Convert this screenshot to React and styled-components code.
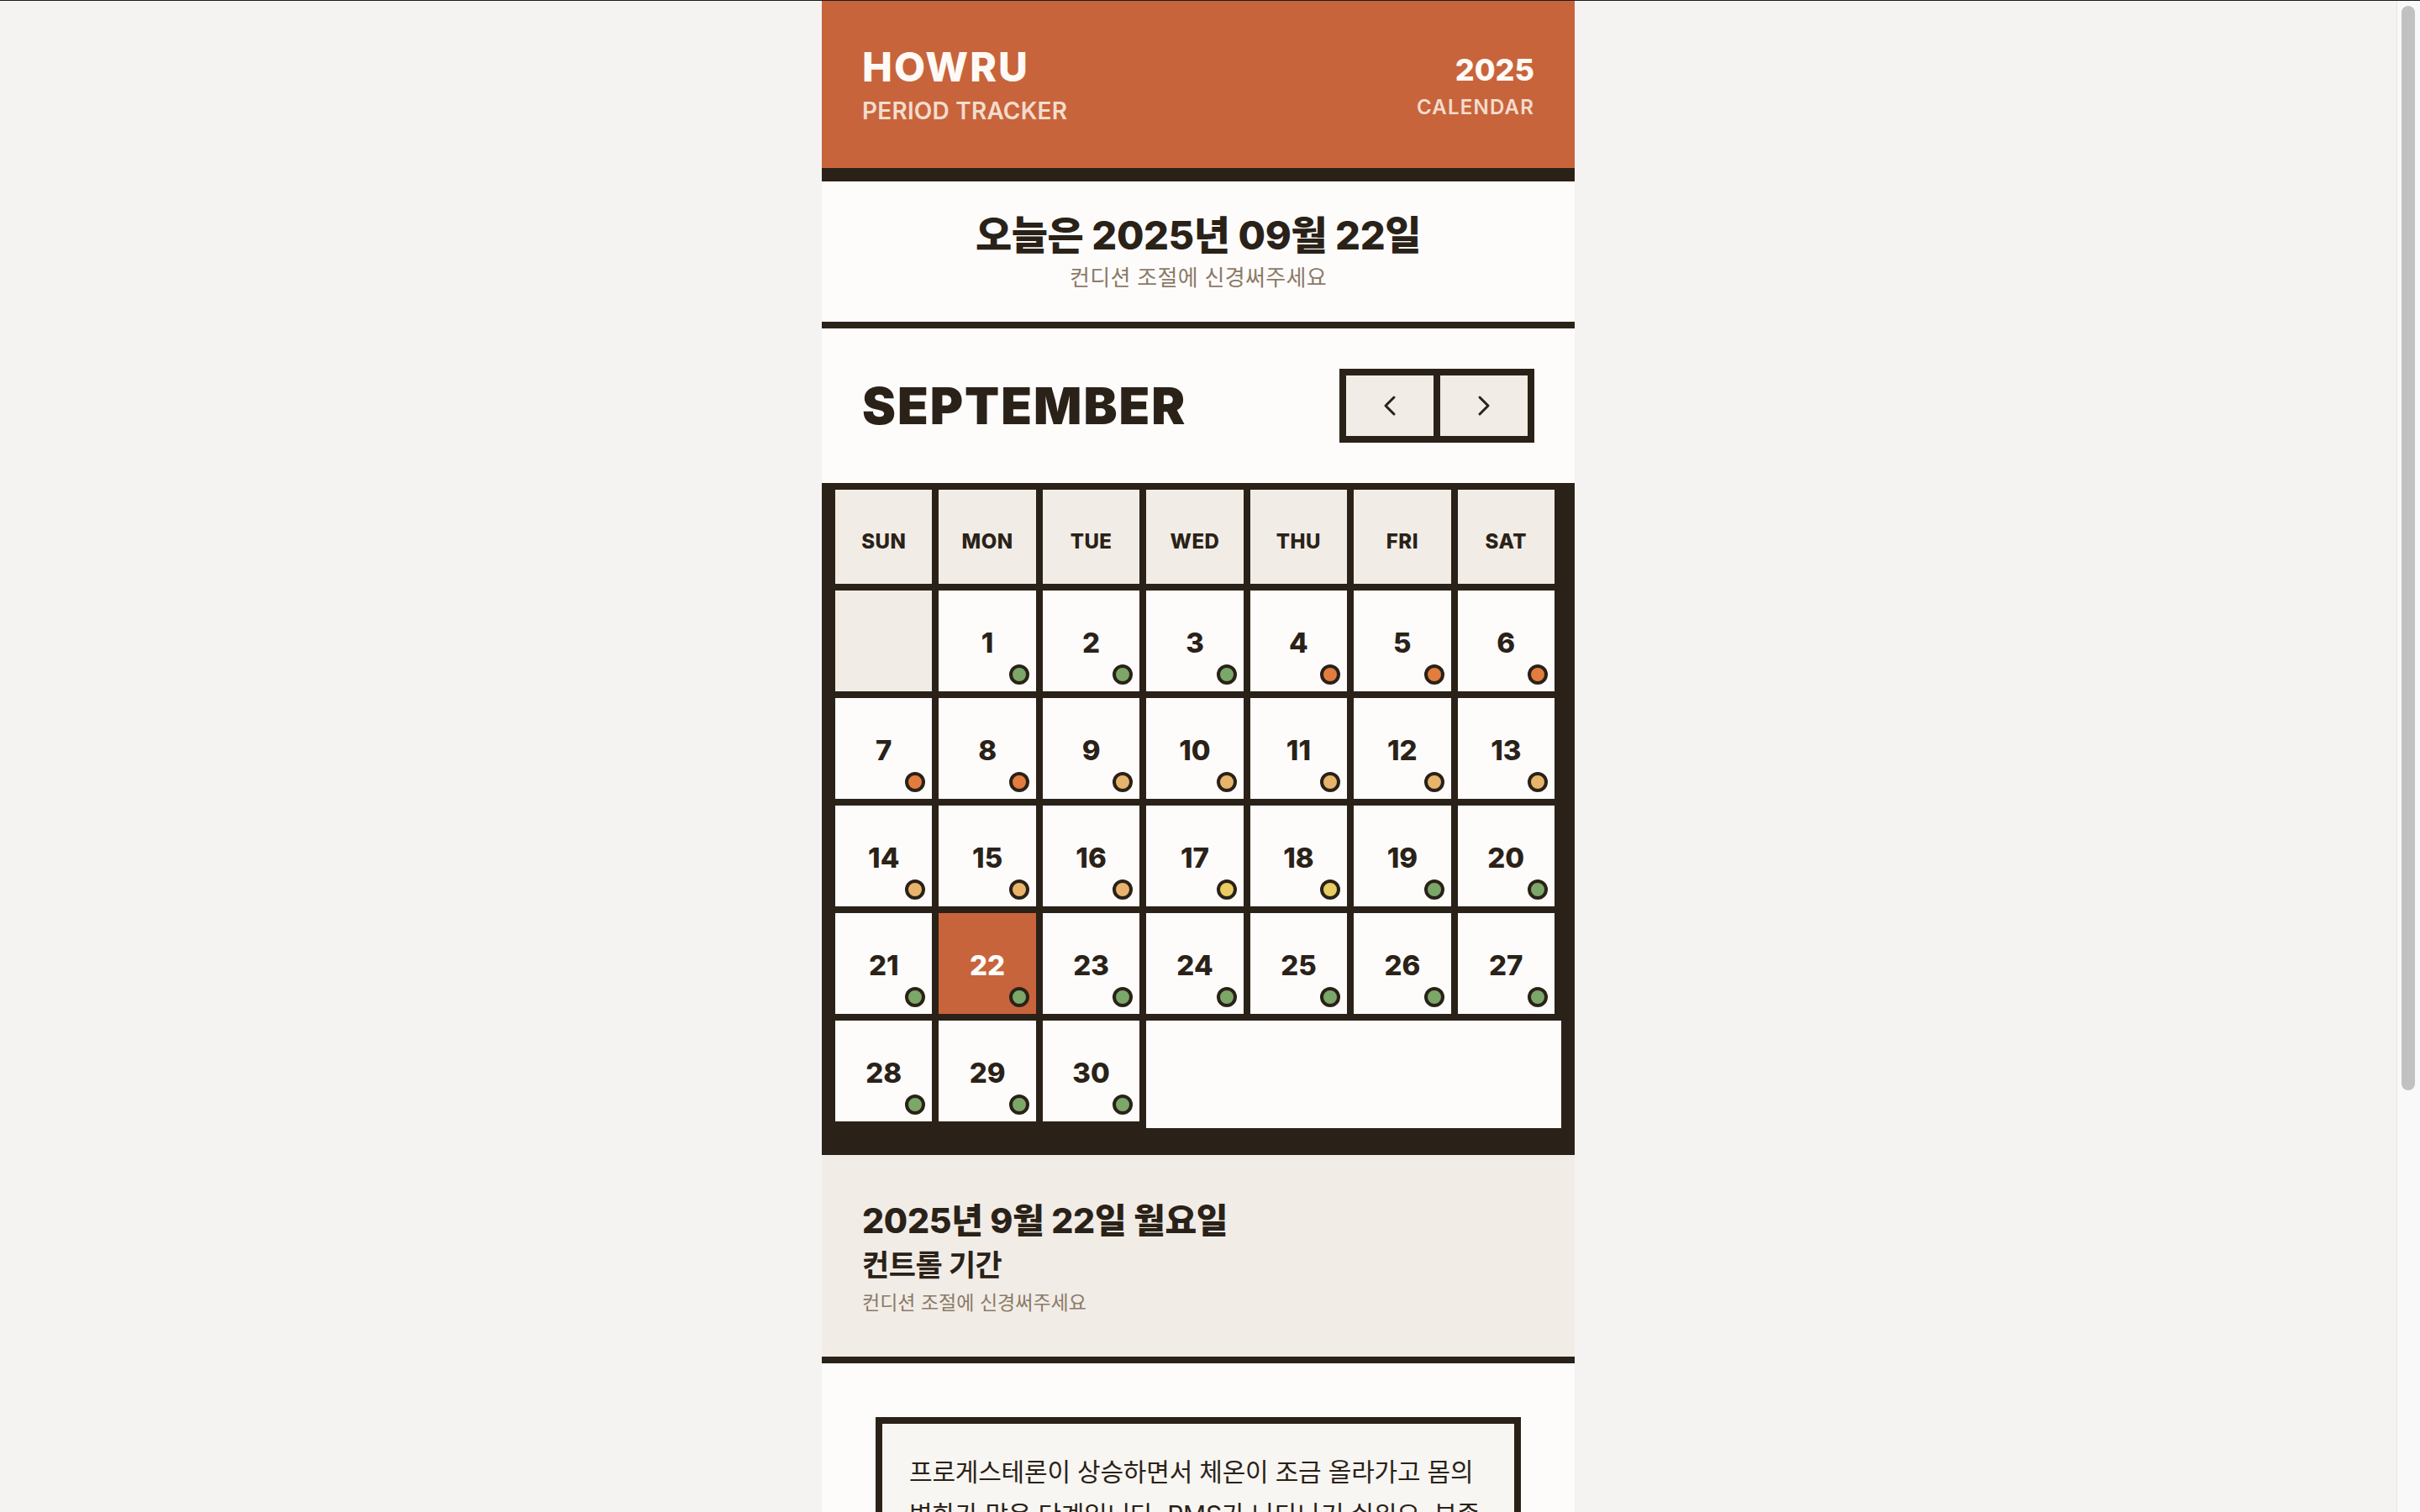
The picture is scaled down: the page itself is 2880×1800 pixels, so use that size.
import React from 'react';
import styled, { createGlobalStyle } from 'styled-components';
import { ChevronLeft, ChevronRight } from 'lucide-react';

const C = {
  dark: '#2a2218',
  orange: '#c8643b',
  beige: '#f1ece6',
  paper: '#fdfcfb',
  page: '#f4f3f1',
  taupe: '#8b7a66',
  cream: '#f4dccd',
  note: '#f8f6f2',
};

const PHASE = {
  green: '#7ba768',
  orange: '#e27d3f',
  peach: '#e8b46c',
  yellow: '#e9cd63',
};

const Global = createGlobalStyle`
  html, body { margin: 0; padding: 0; background: ${C.page}; }
  body {
    font-family: Inter, "Noto Sans CJK KR", sans-serif;
    color: ${C.dark};
  }
  body::before {
    content: '';
    position: fixed;
    top: 0; left: 0; right: 0;
    height: 1px;
    background: #1c1c1c;
    z-index: 10;
  }
`;

const Page = styled.div`
  min-height: 100vh;
  padding-right: 28px;
`;

/* window scrollbar drawn over the page edge */
const ScrollTrack = styled.div`
  position: fixed;
  top: 0;
  right: 0;
  bottom: 0;
  width: 28px;
  box-sizing: border-box;
  background: #f9f9f9;
  border-left: 1px solid #e6e6e6;
  z-index: 5;
`;

const ScrollThumb = styled.div`
  margin: 7px 0 0 5px;
  width: 16px;
  height: 1291px;
  border-radius: 8px;
  background: #c1c1c1;
`;

const Panel = styled.main`
  width: 896px;
  margin: 0 auto;
  background: ${C.paper};
`;

const Header = styled.header`
  box-sizing: border-box;
  height: 216px;
  display: flex;
  justify-content: space-between;
  align-items: flex-start;
  padding: 48px;
  background: ${C.orange};
  border-bottom: 16px solid ${C.dark};
`;

const Brand = styled.div`
  display: flex;
  flex-direction: column;
`;

const Logo = styled.h1`
  margin: 0;
  font-size: 48px;
  font-weight: 800;
  line-height: 1.35;
  letter-spacing: 2px;
  color: #fffaf6;
`;

const Tagline = styled.div`
  margin-top: 1px;
  font-size: 28px;
  font-weight: 600;
  line-height: 1.35;
  letter-spacing: 0.2px;
  color: ${C.cream};
`;

const YearBlock = styled.div`
  display: flex;
  flex-direction: column;
  align-items: flex-end;
  padding-top: 14px;
`;

const Year = styled.div`
  font-size: 36px;
  font-weight: 800;
  line-height: 1.2;
  color: #fffaf6;
`;

const YearLabel = styled.div`
  margin-top: 6px;
  font-size: 24px;
  font-weight: 600;
  line-height: 1.4;
  letter-spacing: 1.2px;
  color: ${C.cream};
`;

const Today = styled.section`
  padding: 35px 48px 34px;
  text-align: center;
  border-bottom: 8px solid ${C.dark};
`;

const TodayTitle = styled.h2`
  margin: 0;
  font-size: 47px;
  font-weight: 800;
  line-height: 1.25;
  letter-spacing: -0.4px;
`;

const Hint = styled.p`
  margin: ${(p) => (p.$small ? '0' : '3px 0 0')};
  font-size: ${(p) => (p.$small ? 23 : 26)}px;
  line-height: ${(p) => (p.$small ? '36px' : '1.4')};
  letter-spacing: ${(p) => (p.$small ? '0' : '0.3px')};
  font-weight: 400;
  color: ${C.taupe};
`;

const MonthBar = styled.section`
  display: flex;
  justify-content: space-between;
  align-items: center;
  padding: 48px;
`;

const MonthName = styled.h2`
  margin: 0;
  font-size: 60px;
  font-weight: 900;
  line-height: 1;
  letter-spacing: 2px;
`;

const Nav = styled.div`
  display: flex;
  gap: 8px;
  border: 8px solid ${C.dark};
  background: ${C.dark};
`;

const NavButton = styled.button`
  width: 104px;
  height: 72px;
  display: flex;
  align-items: center;
  justify-content: center;
  padding: 0;
  border: none;
  background: ${C.beige};
  color: ${C.dark};
  cursor: pointer;
`;

const CalendarFrame = styled.section`
  background: ${C.dark};
  padding: 8px 16px 32px;
`;

const Grid = styled.div`
  display: grid;
  grid-template-columns: repeat(7, 1fr);
  background: ${C.paper};
`;

const WeekCell = styled.div`
  box-sizing: border-box;
  height: 120px;
  padding-top: 10px;
  display: flex;
  align-items: center;
  justify-content: center;
  background: ${C.beige};
  border-right: 8px solid ${C.dark};
  border-bottom: 8px solid ${C.dark};
  font-size: 24px;
  font-weight: 800;
  letter-spacing: 0.5px;
`;

const DayCell = styled.div`
  position: relative;
  box-sizing: border-box;
  height: 128px;
  padding-top: 4px;
  display: flex;
  align-items: center;
  justify-content: center;
  background: ${(p) => (p.$blank ? C.beige : p.$today ? C.orange : C.paper)};
  color: ${(p) => (p.$today ? '#ffffff' : C.dark)};
  border-right: 8px solid ${C.dark};
  border-bottom: 8px solid ${C.dark};
  font-size: 33px;
  font-weight: 800;
`;

const Dot = styled.span`
  position: absolute;
  right: 8px;
  bottom: 8px;
  box-sizing: border-box;
  width: 24px;
  height: 24px;
  border-radius: 50%;
  border: 4px solid ${C.dark};
  background: ${(p) => p.$color};
`;

const Info = styled.section`
  padding: 52px 48px 46px;
  background: ${C.beige};
  border-bottom: 8px solid ${C.dark};
`;

const InfoDate = styled.h3`
  margin: 0 0 4px;
  font-size: 41px;
  font-weight: 800;
  line-height: 52px;
  letter-spacing: -0.3px;
`;

const Phase = styled.div`
  margin-bottom: 4px;
  font-size: 35px;
  font-weight: 700;
  line-height: 46px;
  letter-spacing: -0.5px;
`;

const Detail = styled.section`
  padding: 64px;
`;

const NoteBox = styled.div`
  border: 8px solid ${C.dark};
  background: ${C.note};
  padding: 32px;
`;

const NoteText = styled.p`
  margin: 0;
  font-size: 30px;
  line-height: 1.7;
  letter-spacing: -0.2px;
  color: ${C.dark};
`;

const Legend = styled.div`
  margin-top: 48px;
  border: 8px solid ${C.dark};
  background: ${C.paper};
`;

const LegendTitle = styled.div`
  padding: 24px 32px;
  background: ${C.beige};
  border-bottom: 8px solid ${C.dark};
  font-size: 28px;
  font-weight: 800;
`;

const LegendRow = styled.div`
  display: flex;
  align-items: center;
  gap: 20px;
  padding: 18px 32px;
  font-size: 26px;
  line-height: 1.4;
`;

const LegendDot = styled(Dot)`
  position: static;
  flex: none;
`;

const Footer = styled.footer`
  padding: 40px 48px 56px;
  background: ${C.dark};
  color: ${C.beige};
  font-size: 22px;
  font-weight: 600;
  letter-spacing: 1px;
  text-align: center;
`;

const WEEK = ['SUN', 'MON', 'TUE', 'WED', 'THU', 'FRI', 'SAT'];

const phaseOf = (d) => {
  if (d <= 3) return PHASE.green;
  if (d <= 8) return PHASE.orange;
  if (d <= 16) return PHASE.peach;
  if (d <= 18) return PHASE.yellow;
  return PHASE.green;
};

const days = Array.from({ length: 30 }, (_, i) => i + 1);

export default function App() {
  return (
    <Page>
      <Global />
      <ScrollTrack>
        <ScrollThumb />
      </ScrollTrack>
      <Panel>
        <Header>
          <Brand>
            <Logo>HOWRU</Logo>
            <Tagline>PERIOD TRACKER</Tagline>
          </Brand>
          <YearBlock>
            <Year>2025</Year>
            <YearLabel>CALENDAR</YearLabel>
          </YearBlock>
        </Header>

        <Today>
          <TodayTitle>오늘은 2025년 09월 22일</TodayTitle>
          <Hint>컨디션 조절에 신경써주세요</Hint>
        </Today>

        <MonthBar>
          <MonthName>SEPTEMBER</MonthName>
          <Nav>
            <NavButton aria-label="이전 달">
              <ChevronLeft size={40} strokeWidth={1.8} />
            </NavButton>
            <NavButton aria-label="다음 달">
              <ChevronRight size={40} strokeWidth={1.8} />
            </NavButton>
          </Nav>
        </MonthBar>

        <CalendarFrame>
          <Grid>
            {WEEK.map((w) => (
              <WeekCell key={w}>{w}</WeekCell>
            ))}
            <DayCell $blank />
            {days.map((d) => (
              <DayCell key={d} $today={d === 22}>
                {d}
                <Dot $color={phaseOf(d)} />
              </DayCell>
            ))}
          </Grid>
        </CalendarFrame>

        <Info>
          <InfoDate>2025년 9월 22일 월요일</InfoDate>
          <Phase>컨트롤 기간</Phase>
          <Hint $small>컨디션 조절에 신경써주세요</Hint>
        </Info>

        <Detail>
          <NoteBox>
            <NoteText>
              프로게스테론이 상승하면서 체온이 조금 올라가고 몸의 변화가 많은 단계입니다. PMS가 나타나기 쉬워요. 부종이나 예민함이 느껴질 수 있으니 충분한 휴식과 수분 섭취를 챙겨주세요.
            </NoteText>
          </NoteBox>
          <Legend>
            <LegendTitle>주기 안내</LegendTitle>
            <LegendRow>
              <LegendDot $color={PHASE.orange} />
              생리 기간
            </LegendRow>
            <LegendRow>
              <LegendDot $color={PHASE.peach} />
              여포기
            </LegendRow>
            <LegendRow>
              <LegendDot $color={PHASE.yellow} />
              배란기
            </LegendRow>
            <LegendRow>
              <LegendDot $color={PHASE.green} />
              컨트롤 기간
            </LegendRow>
          </Legend>
        </Detail>
        <Footer>HOWRU · PERIOD TRACKER</Footer>
      </Panel>
    </Page>
  );
}
